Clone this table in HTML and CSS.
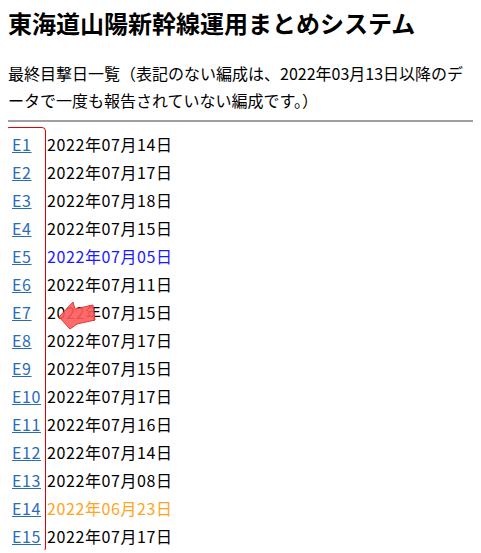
FILE: index.html
```html
<!DOCTYPE html>
<html lang="ja">
<head>
    <meta charset="UTF-8">
    <meta name="viewport" content="width=device-width, initial-scale=1.0">
    <title>東海道山陽新幹線運用まとめシステム</title>
    <link rel="stylesheet" href="styles.css">
</head>
<body>
    <h1 class="title">東海道山陽新幹線運用まとめシステム</h1>
    <p class="lead">最終目撃日一覧（表記のない編成は、2022年03月13日以降のデータで一度も報告されていない編成です。）</p>
    <hr class="rule">

    <div class="list">
        <div class="row"><a href="#">E1</a><span>2022年07月14日</span></div>
        <div class="row"><a href="#">E2</a><span>2022年07月17日</span></div>
        <div class="row"><a href="#">E3</a><span>2022年07月18日</span></div>
        <div class="row"><a href="#">E4</a><span>2022年07月15日</span></div>
        <div class="row"><a href="#">E5</a><span class="old">2022年07月05日</span></div>
        <div class="row"><a href="#">E6</a><span>2022年07月11日</span></div>
        <div class="row"><a href="#">E7</a><span>2022年07月15日</span></div>
        <div class="row"><a href="#">E8</a><span>2022年07月17日</span></div>
        <div class="row"><a href="#">E9</a><span>2022年07月15日</span></div>
        <div class="row"><a href="#">E10</a><span>2022年07月17日</span></div>
        <div class="row"><a href="#">E11</a><span>2022年07月16日</span></div>
        <div class="row"><a href="#">E12</a><span>2022年07月14日</span></div>
        <div class="row"><a href="#">E13</a><span>2022年07月08日</span></div>
        <div class="row"><a href="#">E14</a><span class="older">2022年06月23日</span></div>
        <div class="row"><a href="#">E15</a><span>2022年07月17日</span></div>

        <!-- annotation overlays -->
        <div class="mark-box"></div>
        <svg class="mark-arrow" width="40" height="34" viewBox="0 0 40 34">
            <polygon points="1,19 15,4 17,11 35,7 37,22 19,26 12,31" fill="#ff5a5a" fill-opacity="0.9" stroke="#e03a3a" stroke-width="1" stroke-linejoin="round"/>
        </svg>
    </div>
</body>
</html>
```

FILE: styles.css
```css
* {
    box-sizing: border-box;
}

body {
    margin: 8px;
    font-family: "Noto Sans CJK JP", "Noto Sans", sans-serif;
    font-size: 16px;
    color: #000;
    background: #fff;
}

.title {
    margin: 0;
    font-size: 24px;
    line-height: 30px;
    font-weight: bold;
}

.lead {
    margin: 22px 0 0;
    line-height: 27px;
}

.rule {
    margin: 6px 0 0;
    border: none;
    border-top: 2px solid #a0a0a0;
}

.list {
    position: relative;
    padding-top: 8px;
}

.row {
    display: grid;
    grid-template-columns: 39px auto;
    height: 28px;
    line-height: 28px;
    letter-spacing: 0.6px;
}

.row a {
    padding-left: 4px;
    color: #2a6cb8;
    text-decoration: underline;
}

.old {
    color: #1a1aff;
}

.older {
    color: #ffa41c;
}

.mark-box {
    position: absolute;
    z-index: 1;
    left: -3px;
    top: 5px;
    width: 41px;
    height: 425px;
    border: 1px solid #e00000;
    border-radius: 4px;
}

.mark-arrow {
    position: absolute;
    z-index: 2;
    left: 50px;
    top: 176px;
}
```
